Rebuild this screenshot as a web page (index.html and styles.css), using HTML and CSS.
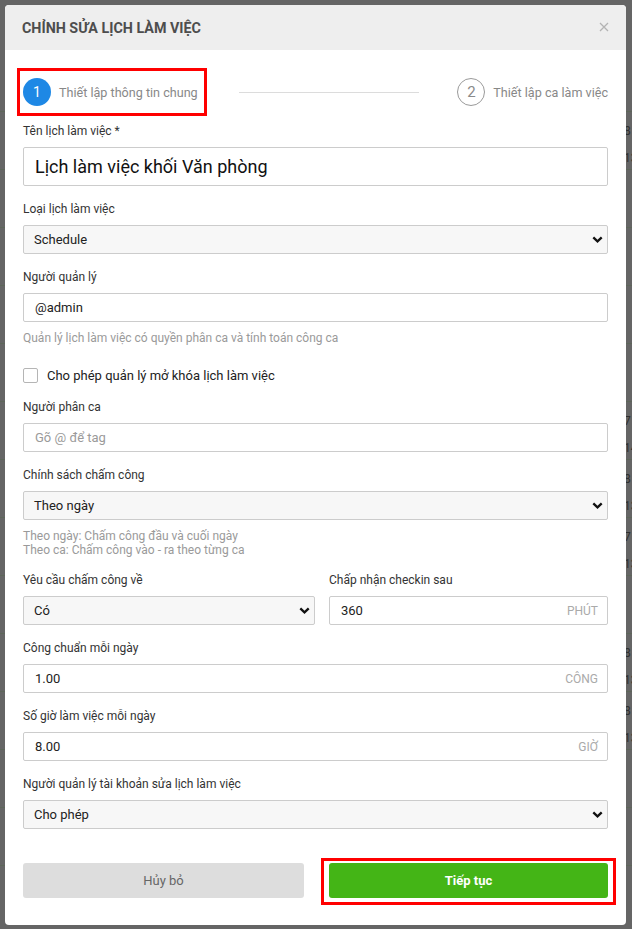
FILE: index.html
```html
<!DOCTYPE html>
<html lang="vi">
<head>
<meta charset="utf-8">
<title>Chỉnh sửa lịch làm việc</title>
<link rel="stylesheet" href="styles.css">
</head>
<body>
<div class="page">
  <div class="bg-row"><span>8</span><span>13</span></div>
  <div class="bg-row"></div>
  <div class="bg-row"></div>
  <div class="bg-row"></div>
  <div class="bg-row"></div>
  <div class="bg-row"><span>7</span><span>14</span></div>
  <div class="bg-row"><span>8</span><span>13</span></div>
  <div class="bg-row"><span>7</span><span>13</span></div>
  <div class="bg-row"></div>
  <div class="bg-row"><span>8</span><span>13</span></div>
  <div class="bg-row"><span>8</span><span>13</span></div>
  <div class="bg-row"></div>
  <div class="bg-row"></div>
  <div class="bg-row"></div>
</div>

<div class="modal">
  <div class="modal-header">
    <h1 class="modal-title">CHỈNH SỬA LỊCH LÀM VIỆC</h1>
    <svg class="close" width="10" height="10" viewBox="0 0 10 10"><path d="M1 1L9 9M9 1L1 9" stroke="#b3b3b3" stroke-width="1.3" fill="none"/></svg>
  </div>
  <div class="modal-body">
    <div class="steps">
      <div class="step step-active">
        <span class="step-num">1</span>
        <span class="step-text">Thiết lập thông tin chung</span>
      </div>
      <div class="step-line"></div>
      <div class="step">
        <span class="step-num step-num-off">2</span>
        <span class="step-text">Thiết lập ca làm việc</span>
      </div>
    </div>

    <div class="field">
      <div class="label">Tên lịch làm việc *</div>
      <div class="input input-lg">Lịch làm việc khối Văn phòng</div>
    </div>

    <div class="field">
      <div class="label">Loại lịch làm việc</div>
      <div class="select"><span>Schedule</span><svg class="chev" width="11" height="7" viewBox="0 0 11 7"><path d="M1.3 1.3L5.5 5.3L9.7 1.3" stroke="#111" stroke-width="2.3" fill="none"/></svg></div>
    </div>

    <div class="field">
      <div class="label">Người quản lý</div>
      <div class="input">@admin</div>
      <p class="help">Quản lý lịch làm việc có quyền phân ca và tính toán công ca</p>
    </div>

    <div class="check">
      <span class="box"></span>
      <span>Cho phép quản lý mở khóa lịch làm việc</span>
    </div>

    <div class="field">
      <div class="label">Người phân ca</div>
      <div class="input placeholder">Gõ @ để tag</div>
    </div>

    <div class="field">
      <div class="label">Chính sách chấm công</div>
      <div class="select"><span>Theo ngày</span><svg class="chev" width="11" height="7" viewBox="0 0 11 7"><path d="M1.3 1.3L5.5 5.3L9.7 1.3" stroke="#111" stroke-width="2.3" fill="none"/></svg></div>
      <p class="help">Theo ngày: Chấm công đầu và cuối ngày<br>Theo ca: Chấm công vào - ra theo từng ca</p>
    </div>

    <div class="field two-col">
      <div>
        <div class="label">Yêu cầu chấm công về</div>
        <div class="select"><span>Có</span><svg class="chev" width="11" height="7" viewBox="0 0 11 7"><path d="M1.3 1.3L5.5 5.3L9.7 1.3" stroke="#111" stroke-width="2.3" fill="none"/></svg></div>
      </div>
      <div>
        <div class="label">Chấp nhận checkin sau</div>
        <div class="input suffixed"><span>360</span><span class="suffix">PHÚT</span></div>
      </div>
    </div>

    <div class="field">
      <div class="label">Công chuẩn mỗi ngày</div>
      <div class="input suffixed"><span>1.00</span><span class="suffix">CÔNG</span></div>
    </div>

    <div class="field">
      <div class="label">Số giờ làm việc mỗi ngày</div>
      <div class="input suffixed"><span>8.00</span><span class="suffix">GIỜ</span></div>
    </div>

    <div class="field">
      <div class="label">Người quản lý tài khoản sửa lịch làm việc</div>
      <div class="select"><span>Cho phép</span><svg class="chev" width="11" height="7" viewBox="0 0 11 7"><path d="M1.3 1.3L5.5 5.3L9.7 1.3" stroke="#111" stroke-width="2.3" fill="none"/></svg></div>
    </div>

    <div class="footer">
      <button class="btn btn-cancel">Hủy bỏ</button>
      <button class="btn btn-next">Tiếp tục</button>
    </div>
  </div>
</div>
</body>
</html>
```

FILE: styles.css
```css
* { box-sizing: border-box; }

html, body {
  margin: 0;
  padding: 0;
}

body {
  width: 632px;
  height: 929px;
  overflow: hidden;
  background: #656565;
  font-family: Roboto, "Noto Sans", "Liberation Sans", sans-serif;
  position: relative;
}

/* dimmed page behind the dialog */
.page {
  padding-top: 111px;
}

.bg-row {
  height: 58px;
  border-top: 1px solid #5d6659;
  display: flex;
  flex-direction: column;
  padding: 6px 0 0 624px;
  font-size: 12px;
  line-height: 27px;
  color: #2f2f2f;
}

/* dialog */
.modal {
  position: absolute;
  top: 5px;
  left: 5px;
  width: 621px;
  height: 920px;
  background: #fff;
  border-radius: 4px;
  overflow: hidden;
}

.modal-header {
  height: 45px;
  background: #eeeeee;
  display: flex;
  align-items: center;
  justify-content: space-between;
  padding: 0 17px 0 17px;
}

.modal-title {
  margin: 0;
  font-size: 14.3px;
  font-weight: 700;
  color: #4d4d4d;
}

.close {
  display: block;
  margin-top: -2px;
}

.modal-body {
  padding: 24px 18px 0 18px;
  display: flex;
  flex-direction: column;
}

/* steps */
.steps {
  height: 36px;
  display: flex;
  align-items: center;
  justify-content: space-between;
  margin-bottom: 12px;
}

.step {
  display: flex;
  align-items: center;
  gap: 8px;
  height: 36px;
}

.step-active {
  outline: 3px solid #ff0000;
  outline-offset: 3px;
  padding-right: 3px;
}

.step-num {
  width: 28px;
  height: 28px;
  border-radius: 50%;
  background: #1e88e5;
  color: #fff;
  font-size: 14px;
  display: flex;
  align-items: center;
  justify-content: center;
}

.step-num-off {
  background: #fff;
  border: 1px solid #9a9a9a;
  color: #8a8a8a;
  font-size: 15px;
}

.step-text {
  font-size: 12.6px;
  color: #888;
}

.step-line {
  width: 180px;
  height: 1px;
  background: #dcdcdc;
}

/* form */
.field {
  margin-bottom: 14px;
}

.label {
  font-size: 12px;
  line-height: 18px;
  color: #333;
  margin-bottom: 7px;
}

.input,
.select {
  height: 29px;
  border: 1px solid #cccccc;
  border-radius: 2px;
  font-size: 13px;
  color: #222;
  display: flex;
  align-items: center;
}

.input {
  background: #fff;
  padding: 0 11px;
}

.input-lg {
  height: 39px;
  font-size: 18px;
  color: #111;
}

.placeholder {
  color: #9a9a9a;
}

.select {
  background: #f7f7f7;
  padding: 0 4px 0 10px;
  justify-content: space-between;
}

.chev {
  display: block;
}

.suffixed {
  justify-content: space-between;
  padding-right: 9px;
}

.suffix {
  font-size: 12px;
  color: #aaaaaa;
}

.help {
  margin: 9px 0 0 0;
  font-size: 12px;
  line-height: 14px;
  color: #9a9a9a;
}

.check {
  display: flex;
  align-items: center;
  gap: 9px;
  height: 18px;
  margin: 7px 0 14px 0;
  font-size: 13px;
  color: #222;
}

.box {
  width: 15px;
  height: 15px;
  border: 1px solid #b5b5b5;
  border-radius: 2px;
  background: #fff;
}

.two-col {
  display: grid;
  grid-template-columns: 292px 1fr;
  column-gap: 14px;
}

/* footer */
.footer {
  display: grid;
  grid-template-columns: 281px 1fr;
  column-gap: 25px;
  padding-top: 20px;
}

.btn {
  height: 35px;
  border: none;
  border-radius: 3px;
  font-family: Roboto, "Noto Sans", "Liberation Sans", sans-serif;
  font-size: 13px;
}

.btn-cancel {
  background: #dddddd;
  color: #666;
}

.btn-next {
  background: #44b516;
  color: #fff;
  font-weight: 700;
  position: relative;
}

.btn-next::after {
  content: "";
  position: absolute;
  top: -5px;
  bottom: -7px;
  left: -8px;
  right: -8px;
  border: 3px solid #ff0000;
}
```
